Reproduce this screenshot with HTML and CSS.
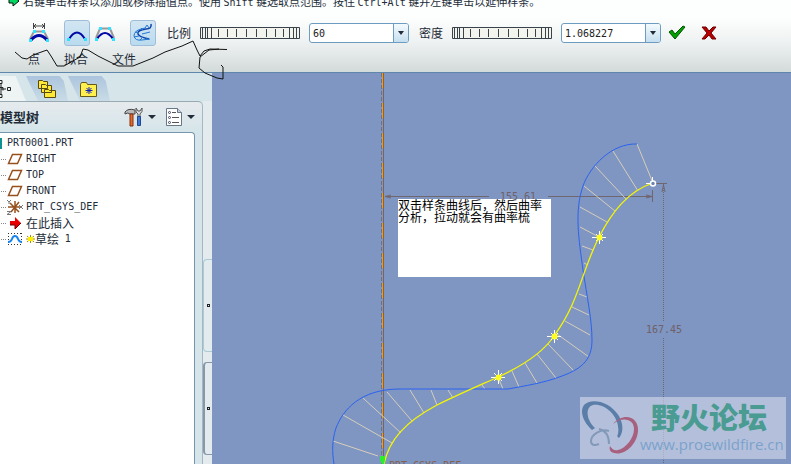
FILE: index.html
```html
<!DOCTYPE html>
<html lang="zh-CN">
<head>
    <meta charset="UTF-8">
    <meta name="viewport" content="width=device-width, initial-scale=1.0">
    <title>PRT0001 - 样条曲率分析</title>
    <link rel="stylesheet" href="styles.css">
</head>
<body>
    <header class="dashboard">
        <p class="hint">
            <svg class="hint-icon" width="12" height="12" viewBox="0 0 12 12"><path d="M1 3h4V0l6 5-6 5V7H1z" fill="#00d860" stroke="#111"/></svg>
            <span>右键单击样条以添加或移除插值点。使用 <span class="latin">Shift</span> 键选取点范围。按住 <span class="latin">Ctrl+Alt</span> 键并左键单击以延伸样条。</span>
        </p>

        <div class="controls">
            <div class="tools">
                <button type="button" class="tool" aria-label="点">
                    <svg width="22" height="22" viewBox="0 0 22 22" fill="none">
                        <path d="M5.500 1v6M16.500 1v6M6 4h10M8 2L6 4l2 2M14 2l2 2-2 2" stroke="#444"/>
                        <path d="M2 17L6 9.500h10l4 7.500" stroke="#999" stroke-width="2"/>
                        <path d="M3 18q8-9 16 0" stroke="#0008a8" stroke-width="3"/>
                        <path d="M1 17h3v3H1zM18 17h3v3h-3zM5 8h3v3H5zM14 8h3v3h-3z" fill="#35dfff"/>
                    </svg>
                </button>
                <button type="button" class="tool active" aria-label="拟合">
                    <svg width="22" height="22" viewBox="0 0 22 22" fill="none">
                        <path d="M3 17q8-13 16 0" stroke="#0008a8" stroke-width="2"/>
                        <path d="M1 16h3v3H1zM18 16h3v3h-3z" fill="#35dfff"/>
                    </svg>
                </button>
                <button type="button" class="tool" aria-label="控制多边形">
                    <svg width="22" height="22" viewBox="0 0 22 22" fill="none">
                        <path d="M2 16L6 6.500h10l4 9.500" stroke="#999" stroke-width="2"/>
                        <path d="M3 17q8-12 16 0" stroke="#0008a8" stroke-width="2"/>
                        <path d="M1 16h3v3H1zM18 16h3v3h-3zM5 5h3v3H5zM14 5h3v3h-3z" fill="#35dfff"/>
                    </svg>
                </button>
                <button type="button" class="tool active" aria-label="曲率分析">
                    <svg width="22" height="22" viewBox="0 0 22 22" fill="none">
                        <path d="M19 2q1 5-5 5Q5 8 6 12q1 3 11 5" stroke="#0a3fa8" stroke-width="1.500"/>
                        <path d="M15 3q-1 4-6 4-7 2-7 7 1 5 8 4l8-1M15 3l2 3M9 6l2 2M3 10l4 1M2 15l5-1M8 18l3-3M14 18l1-2M10 12l8-2" stroke="#2377d4"/>
                    </svg>
                </button>
            </div>

            <label class="dial-label" for="scale">比例</label>
            <svg class="dial" width="100" height="12" viewBox="0 0 100 12"><path d="M.5.500h99v11H.5zM2.500 1v10M5.500 1v10M7.500 1v10M11.500 1v10M18.500 2v8M27.500 2v8M36.500 2v8M46.500 2v8M56.500 2v8M66.500 2v8M75.500 2v8M83.500 2v8M89.500 1v10M93.500 1v10M96.500 1v10"/></svg>
            <div class="combo">
                <input type="text" id="scale" value="60">
                <button type="button" aria-label="比例列表"><span class="arrow"></span></button>
            </div>

            <label class="dial-label" for="density">密度</label>
            <svg class="dial" width="100" height="12" viewBox="0 0 100 12"><path d="M.5.500h99v11H.5zM2.500 1v10M5.500 1v10M7.500 1v10M11.500 1v10M18.500 2v8M27.500 2v8M36.500 2v8M46.500 2v8M56.500 2v8M66.500 2v8M75.500 2v8M83.500 2v8M89.500 1v10M93.500 1v10M96.500 1v10"/></svg>
            <div class="combo">
                <input type="text" id="density" value="1.068227">
                <button type="button" aria-label="密度列表"><span class="arrow"></span></button>
            </div>

            <button type="button" class="confirm" aria-label="确定">
                <svg width="18" height="16" viewBox="0 0 18 16"><path d="M1 7l3-2 3 4 8-8 2 1-10 12z" fill="#00a000" stroke="#064f06"/></svg>
            </button>
            <button type="button" class="confirm cancel" aria-label="取消">
                <svg width="16" height="16" viewBox="0 0 16 16"><path d="M1 2h4l3 4 4-4h3l-5 6 5 6h-4l-3-4-4 4H1l5-6z" fill="#b80000" stroke="#700000"/></svg>
            </button>
        </div>

        <div class="subtabs">
            <span>点</span>
            <span>拟合</span>
            <span>文件</span>
        </div>
    </header>

    <main>
        <aside class="navigator">
            <div class="tabs">
                <button type="button" class="tab current" aria-label="模型树">
                    <svg width="14" height="20" viewBox="0 0 14 20" fill="none" stroke="#222"><path d="M-1 1.500h3v3h-3M-1 8.500h4M3 8.500v3M-1 15.500h3v3h-3M1 10h5M7.500 8.500h3v3h-3zM1 5v10"/></svg>
                </button>
                <button type="button" class="tab" aria-label="文件夹浏览器">
                    <svg width="20" height="20" viewBox="0 0 20 20" fill="#ffe838" stroke="#554a10"><path d="M1.500 1.500h4l1 1h4v7h-9zM4.500 5.500h4l1 1h5v7h-10zM7.500 10.500h4l1 1h6v7h-11z"/></svg>
                </button>
                <button type="button" class="tab" aria-label="收藏夹">
                    <svg width="18" height="16" viewBox="0 0 18 16"><path d="M.5 3.500l1-2h5l1 2h9v12H.5z" fill="#fff050" stroke="#665a18"/><path d="M9 6v7M5.500 9.500h7M6.500 7l5 5M11.500 7l-5 5" stroke="#1020c0"/></svg>
                </button>
            </div>

            <div class="panel">
                <div class="panel-head">
                    <h2>模型树</h2>
                    <button type="button" class="menu" aria-label="设置">
                        <svg width="20" height="20" viewBox="0 0 20 20"><path d="M1 5q3-4 10-2v4H6q-2-2-5 0z" fill="#bbb" stroke="#444"/><path d="M6 7h3v12H6z" fill="#e86a28" stroke="#803010"/><path d="M12 1q-1 5 2 6v4h2V7q3-2 2-6l-2 3h-2z" fill="#ddd" stroke="#555"/><path d="M13.500 9.500h3v9h-3z" fill="#3a78d8" stroke="#204890"/></svg>
                        <span class="arrow big"></span>
                    </button>
                    <button type="button" class="menu" aria-label="显示">
                        <svg width="18" height="20" viewBox="0 0 18 20"><path d="M1.500 1.500h11l4 4v13h-15z" fill="#fff" stroke="#678"/><path d="M12.500 1.500v4h4" fill="#ccd" stroke="#678"/><path d="M7 5.500h4M7 10.500h7M7 15.500h7" stroke="#555"/><g fill="#fff" stroke="#446"><circle cx="4.500" cy="5.500" r="1"/><circle cx="4.500" cy="10.500" r="1"/><circle cx="4.500" cy="15.500" r="1"/></g></svg>
                        <span class="arrow big"></span>
                    </button>
                </div>

                <ul class="tree">
                    <li class="root latin"><span class="part-icon"></span>PRT0001.PRT</li>
                    <li class="latin"><svg width="16" height="14" viewBox="0 0 16 14"><path d="M5.500 2.500h9l-4 9h-9z" fill="none" stroke="#96501e" stroke-width="1.500"/></svg>RIGHT</li>
                    <li class="latin"><svg width="16" height="14" viewBox="0 0 16 14"><path d="M5.500 2.500h9l-4 9h-9z" fill="none" stroke="#96501e" stroke-width="1.500"/></svg>TOP</li>
                    <li class="latin"><svg width="16" height="14" viewBox="0 0 16 14"><path d="M5.500 2.500h9l-4 9h-9z" fill="none" stroke="#96501e" stroke-width="1.500"/></svg>FRONT</li>
                    <li class="latin"><svg width="16" height="16" viewBox="0 0 16 16" fill="none"><path d="M1 8h12M8 2v12M3 4l9 9M12 3l-8 10" stroke="#96501e" stroke-width="1.500"/><path d="M0 1l2 2 2-2M2 3v2M0 12.500h4l-4 3h4M12 6l4 4M16 6l-4 4" stroke="#777"/></svg>PRT_CSYS_DEF</li>
                    <li><svg width="16" height="14" viewBox="0 0 16 14"><path d="M3 5h5V1l6 6-6 6V9H3z" fill="#e80000"/><path d="M3 9h5v4l6-6" fill="none" stroke="#700000"/></svg>在此插入</li>
                    <li><svg width="16" height="14" viewBox="0 0 16 14" fill="none"><path d="M1 1.500h14M1 12.500h14M1.500 1v12M14.500 1v12" stroke="#333" stroke-dasharray="1 2"/><path d="M1 10q3 0 4-3t3-3q2 0 3 3t4 3" stroke="#1683ee" stroke-width="2"/></svg><svg class="star" width="9" height="8" viewBox="0 0 9 8"><path d="M4.500 0v8M0 4h9M1 1l7 6M8 1L1 7" stroke="#a09000"/><path d="M2 2h5v4H2z" fill="#ffee00"/></svg>草绘 <span class="latin">1</span></li>
                </ul>
            </div>

            <div class="sash">
                <span class="grip"></span>
                <span class="grip dark"></span>
            </div>
        </aside>

        <section class="viewport">
            <svg class="sketch" width="579" height="391" viewBox="212 73 579 391" fill="none">
                <!-- centre line and datum axis -->
                <path d="M381.500 73v391" stroke="#6c7183" stroke-dasharray="4 2"/>
                <path d="M383.500 73v391" stroke="#80644f"/>
                <path d="M382.500 73v375" stroke="#f59a08" stroke-dasharray="15 15"/>

                <!-- dimensions -->
                <g stroke="#70676e">
                    <path d="M385 196.500h104M548 196.500h104M652.500 190v12M656 183.500h11"/>
                    <path d="M663.500 184v137M663.500 338v126" stroke-dasharray="1 1"/>
                    <path d="M391 195l-6 1.500 6 1.500M646 195l6 1.500-6 1.500M662 192l1.500-7 1.500 7"/>
                </g>
                <text class="dim-text" x="500" y="200">155.61</text>
                <text class="dim-text" x="646" y="333">167.45</text>
                <text class="csys-text" x="389" y="469">PRT_CSYS_DEF</text>

                <!-- curvature comb -->
                <path stroke="#d8cdbb" d="M637 144l16 39M613 151l25 40M595 166l31 33M584 186l31 25M580 207l27 15M580 227l19 10M582 246l11 4M584 263l4 2M579 294l8 3M572 307l17 8M565 321l25 14M557 334l32 23M548 344l26 27M537 354l19 24M525 363l12 20M512 371l7 16M498 377l5 12M482 385l3 4M448 390l5 8M431 390l6 15M410 390l14 23M387 392l25 29M363 398l38 35M343 415l49 28M333 441l45 15"/>
                <path stroke="#2c62f0" d="M637 144C612 143 590 166 583 186C574 212 579 240 583 270C587 297 592 320 592 340C592 358 584 368 562 376C544 383 524 386 508 389L400 389C360 389 343 410 336 428C332 440 332 452 334 464"/>

                <!-- spline and its points -->
                <path stroke="#f6f600" stroke-width="1.300" d="M384 464C389 440 405 422 437 405C457 395 478 386 498 377C520 367 542 354 554 336C580 300 580 275 599 237C612 212 628 191 653 183"/>
                <path stroke="#fff" d="M491 377.500h14M498.500 370v14M494 373l8 8M502 373l-8 8M547 336.500h14M554.500 330v13M551 333l7 7M558 333l-7 7M592 237.500h14M599.500 231v13M596 234l7 7M603 234l-7 7M646 183.500h8M652.500 177v8"/>
                <g fill="#ffff20">
                    <circle cx="498.500" cy="377.500" r="3"/>
                    <circle cx="554.500" cy="336.500" r="3"/>
                    <circle cx="599.500" cy="237.500" r="3"/>
                </g>
                <circle cx="653" cy="183.500" r="2.500" fill="#6f86b4" stroke="#fff" stroke-width="1.500"/>
                <path d="M380 456h5v4l-1 4h-2l-2-4z" fill="#28f030"/>
            </svg>

            <p class="note">双击样条曲线后，然后曲率分析，拉动就会有曲率梳</p>

            <div class="watermark">
                <svg width="58" height="56" viewBox="0 0 58 56" fill="none">
                    <path fill="#5b7ea8" fill-rule="evenodd" d="M2 5C8-2 27 0 37 16c5 9 4 17 0 22-2-1-2-2-1-4C39 16 22 3 11 5 3 7 4 20 13 28l-3 2C2 23-3 12 2 5z"/>
                    <path fill="#a8607f" fill-rule="evenodd" d="M31 24c10-12 26-8 25 7-1 14-14 25-24 22-4-1-5-4-4-7 2 3 4 5 8 4 8-2 16-12 16-21 0-10-11-13-21-5z"/>
                    <path d="M27 31c-8-3-18 4-18 10 0 4 3 5 8 3M17 29c8 2 10 8 10 15" stroke="#8299b8" stroke-width="2"/>
                </svg>
                <div class="watermark-text">
                    <strong>野火论坛</strong>
                    <span>www.proewildfire.cn</span>
                </div>
            </div>
        </section>
    </main>

    <!-- pen marks drawn over the toolbar -->
    <svg class="scribble" width="240" height="84" viewBox="0 0 240 84" fill="none" stroke="#111"><path d="M15 52L22 58L27 59L33 55L47 50L51 56L57 66L64 66L80 57L83 49L88 50L98 56L110 62L118 66L133 66L153 58L165 52L182 46L193 41L197 50L200 56L204 51L210 49L227 49.500M200 57L209 50L219 49M200 57L199 68L205 73L217 78L223 79L223 67L221 65"/></svg>
</body>
</html>
```
FILE: styles.css
```css
* {
    box-sizing: border-box;
}

body {
    font-family: "Noto Sans CJK SC", sans-serif;
    font-size: 12px;
    line-height: 16px;
    color: #222c38;
    margin: 0;
    height: 100vh;
    overflow: hidden;
    display: flex;
    flex-direction: column;
}

button {
    background: none;
    border: none;
    padding: 0;
    display: flex;
    align-items: center;
    justify-content: center;
}

.latin {
    font-family: "DejaVu Sans Mono", "Noto Sans CJK SC", monospace;
    font-size: 10px;
}

/* dashboard */
.dashboard {
    flex: none;
    height: 73px;
    background: linear-gradient(#fdfefe 18px, #f0f3f3 40px, #d3dada 72px);
    border-bottom: 1px solid #5f87ab;
    overflow: hidden;
}

.hint {
    display: flex;
    align-items: center;
    gap: 3px;
    margin: -6px 0 0;
    padding-left: 8px;
    font-size: 11px;
    height: 16px;
    white-space: nowrap;
}

.controls {
    display: flex;
    align-items: center;
    height: 26px;
    margin-top: 10px;
    padding-left: 26px;
}

.tools {
    display: flex;
    gap: 2px;
    width: 141px;
}

.tool {
    width: 26px;
    height: 26px;
    border: 1px solid transparent;
    border-radius: 3px;
}

.tool + .tool.active {
    margin-left: 10px;
}

.tool.active {
    background: linear-gradient(#d3e6f2, #b9dbef);
    border-color: #9dbdd8;
}

.dial-label {
    width: 33px;
}

.dial {
    fill: #f4f4ef;
    stroke: #39434c;
}

.combo {
    display: flex;
    width: 100px;
    height: 20px;
    margin-left: 9px;
    margin-right: 10px;
    border: 1px solid #6d9cc0;
    border-radius: 3px;
    background: #fff;
    overflow: hidden;
}

.combo input {
    flex: 1;
    min-width: 0;
    border: none;
    padding: 0 3px;
    background: none;
    color: #222;
    font: 10px "DejaVu Sans Mono", monospace;
}

.combo button {
    width: 15px;
    border-left: 1px solid #6d9cc0;
    background: linear-gradient(#f4fafd, #c5dff0);
}

.arrow {
    border: 3px solid transparent;
    border-top: 4px solid #222c38;
    border-bottom: none;
}

.arrow.big {
    border-width: 4px 4px 0;
}

.confirm {
    width: 18px;
    margin-left: -3px;
}

.confirm.cancel {
    margin-left: 14px;
}

.subtabs {
    display: flex;
    gap: 24px;
    padding: 5px 0 0 28px;
}

/* model tree */
main {
    flex: 1;
    min-height: 0;
    display: flex;
}

.navigator {
    flex: none;
    width: 212px;
    display: grid;
    grid-template-columns: 1fr 9px;
    grid-template-rows: 28px 1fr;
    background: #d5e5ea;
}

.tabs {
    grid-column: 1 / 3;
    display: flex;
    padding-top: 3px;
}

.tab {
    width: 42px;
    height: 25px;
    background: linear-gradient(#acc4dd, #c9dce6);
    clip-path: polygon(0 0, 80% 0, 90% 20%, 100% 100%, 12px 100%);
}

.tab.current {
    width: 26px;
    background: #eef3f4;
    justify-content: flex-start;
    clip-path: polygon(0 0, 60% 0, 100% 100%, 0 100%);
}

.panel {
    display: flex;
    flex-direction: column;
    border-top: 1px solid #9aaab4;
    border-right: 1px solid #a5b8c2;
    border-top-right-radius: 5px;
    background: linear-gradient(#e6eaed, #d5e5ea 30px);
    padding-right: 7px;
}

.panel-head {
    display: flex;
    align-items: center;
    height: 30px;
    gap: 9px;
}

.panel-head h2 {
    flex: 1;
    margin: 0;
    font-size: 13px;
    line-height: 16px;
}

.menu {
    gap: 4px;
}

.tree {
    flex: 1;
    margin: 0;
    padding: 2px 0 0;
    list-style: none;
    background: #fff;
    border-top: 1px solid #7597ad;
    border-right: 1px solid #7597ad;
    border-top-right-radius: 4px;
}

.tree li {
    display: flex;
    align-items: center;
    height: 16px;
    gap: 3px;
    white-space: pre;
}

.tree li::before {
    content: "";
    width: 5px;
    margin-left: 1px;
    margin-right: -2px;
    border-top: 1px dotted #888;
}

.tree li.root::before {
    content: none;
}

.tree li.root {
    gap: 5px;
}

.tree .star {
    margin-right: -3px;
}

.part-icon {
    width: 2px;
    height: 11px;
    background: #109090;
}

.sash {
    display: flex;
    flex-direction: column;
    gap: 10px;
    padding-top: 158px;
    background: #e3ebef;
}

.grip {
    display: flex;
    align-items: center;
    justify-content: center;
    height: 93px;
    border: 1px solid #a8ccd2;
    border-right: none;
    border-radius: 4px 0 0 4px;
}

.grip.dark {
    border-color: #8798ab;
    border-left-width: 2px;
}

.grip::after {
    content: "";
    width: 1px;
    height: 1px;
    border: 1px solid #222;
}

/* graphics window */
.viewport {
    flex: 1;
    position: relative;
    min-width: 0;
    overflow: hidden;
    background: #7e96c1;
}

.sketch {
    display: block;
}

.dim-text,
.csys-text {
    font: 10px "DejaVu Sans Mono", monospace;
    fill: #70606a;
}

.csys-text {
    fill: #86604a;
}

.note {
    position: absolute;
    left: 186px;
    top: 126px;
    width: 153px;
    height: 78px;
    margin: 0;
    padding-right: 8px;
    background: #fff;
    color: #000;
    line-height: 12px;
}

.watermark {
    position: absolute;
    right: 5px;
    bottom: 5px;
    width: 206px;
    height: 62px;
    padding: 3px 2px;
    display: flex;
    background: rgba(224, 228, 240, 0.55);
}

.watermark svg {
    flex: none;
}

.watermark-text {
    display: flex;
    flex-direction: column;
}

.watermark strong {
    margin-left: 11px;
    font-size: 29px;
    font-weight: 900;
    line-height: 32px;
    color: #4a9b91;
}

.watermark span {
    font-family: "Open Sans", sans-serif;
    font-size: 15px;
    line-height: 24px;
    color: #7ba2cc;
}

.scribble {
    position: absolute;
    left: 0;
    top: 0;
    pointer-events: none;
}
```
